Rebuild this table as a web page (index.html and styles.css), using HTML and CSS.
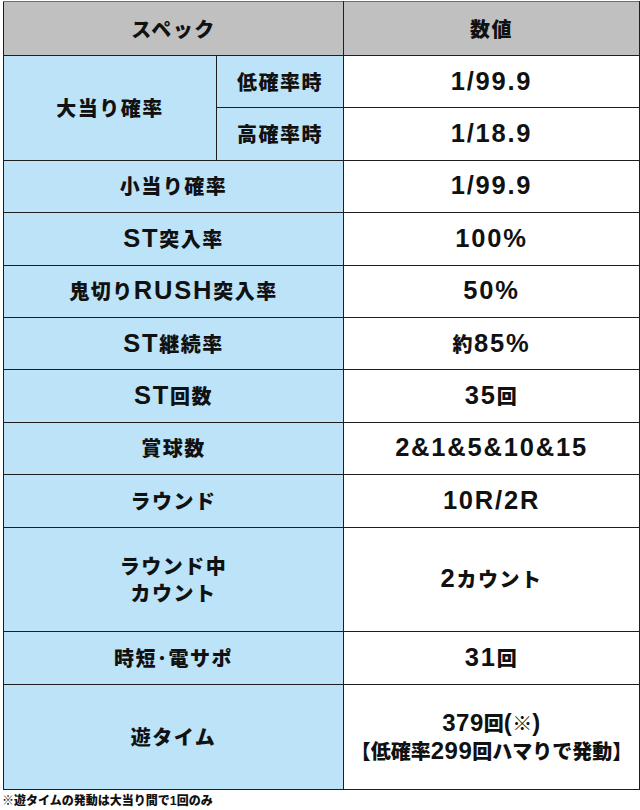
FILE: index.html
```html
<!DOCTYPE html>
<html lang="ja">
<head>
<meta charset="utf-8">
<link rel="stylesheet" href="styles.css">
</head>
<body>
<table class="spec">
  <colgroup><col class="c1"><col class="c2"><col class="c3"></colgroup>
  <thead>
    <tr class="rh"><th colspan="2">スペック</th><th>数値</th></tr>
  </thead>
  <tbody>
    <tr class="r1"><th class="lbl" rowspan="2">大当り確率</th><th class="lbl">低確率時</th><td><span class="n">1/99.9</span></td></tr>
    <tr class="r1"><th class="lbl">高確率時</th><td><span class="n">1/18.9</span></td></tr>
    <tr class="r1"><th class="lbl" colspan="2">小当り確率</th><td><span class="n">1/99.9</span></td></tr>
    <tr class="r1"><th class="lbl" colspan="2"><span class="n">ST</span>突入率</th><td><span class="n">100%</span></td></tr>
    <tr class="r1"><th class="lbl" colspan="2">鬼切り<span class="n">RUSH</span>突入率</th><td><span class="n">50%</span></td></tr>
    <tr class="r1"><th class="lbl" colspan="2"><span class="n">ST</span>継続率</th><td>約<span class="n">85%</span></td></tr>
    <tr class="r1"><th class="lbl" colspan="2"><span class="n">ST</span>回数</th><td><span class="n">35</span>回</td></tr>
    <tr class="r1"><th class="lbl" colspan="2">賞球数</th><td><span class="n">2&amp;1&amp;5&amp;10&amp;15</span></td></tr>
    <tr class="r1"><th class="lbl" colspan="2">ラウンド</th><td><span class="n">10R/2R</span></td></tr>
    <tr class="r2"><th class="lbl multi" colspan="2">ラウンド中<br>カウント</th><td><span class="n">2</span>カウント</td></tr>
    <tr class="r1"><th class="lbl" colspan="2">時短･電サポ</th><td><span class="n">31</span>回</td></tr>
    <tr class="r2"><th class="lbl" colspan="2">遊タイム</th><td class="two"><span class="n">379</span>回<span class="n">(</span>※<span class="n">)</span><br>【低確率<span class="n">299</span>回ハマりで発動】</td></tr>
  </tbody>
</table>
<p class="note">※遊タイムの発動は大当り間で<span class="nn">1</span>回のみ</p>
</body>
</html>
```

FILE: styles.css
```css
html, body {
  margin: 0;
  padding: 0;
  background: #ffffff;
}

.spec {
  border-collapse: collapse;
  table-layout: fixed;
  width: 636px;
  margin: 1px 0 0 3px;
}

.c1 { width: 213px; }
.c2 { width: 127px; }
.c3 { width: 296px; }

.spec th,
.spec td {
  border: 1px solid #1e1e1e;
  padding: 0;
  text-align: center;
  vertical-align: middle;
  font-family: "Noto Sans CJK JP", sans-serif;
  font-weight: 900;
  font-size: 20px;
  letter-spacing: 1.5px;
  line-height: 26px;
  color: #111111;
  white-space: nowrap;
}

.spec thead th {
  background: #c0c0c0;
  border-top-color: #6e6e6e;
}

.rh { height: 54px; }
.r1 { height: 52.4px; }
.r2 { height: 104.8px; }

.spec .lbl {
  background: #bce3f8;
}

.spec .multi {
  line-height: 27px;
}

.spec td {
  background: #ffffff;
}

.spec .two {
  line-height: 28px;
  letter-spacing: 0;
}

.spec .two .n {
  font-size: 24px;
  letter-spacing: 0.5px;
}

.n {
  font-family: "Liberation Sans", Arial, sans-serif;
  font-weight: 700;
  font-size: 25.5px;
  letter-spacing: 1.8px;
  line-height: 1;
}

.note {
  margin: 2px 0 0 2px;
  font-family: "Noto Sans CJK JP", sans-serif;
  font-weight: 900;
  font-size: 12px;
  line-height: 16px;
  color: #111111;
}

.nn {
  font-family: "Liberation Sans", Arial, sans-serif;
  font-weight: 700;
  font-size: 12.5px;
}
```
